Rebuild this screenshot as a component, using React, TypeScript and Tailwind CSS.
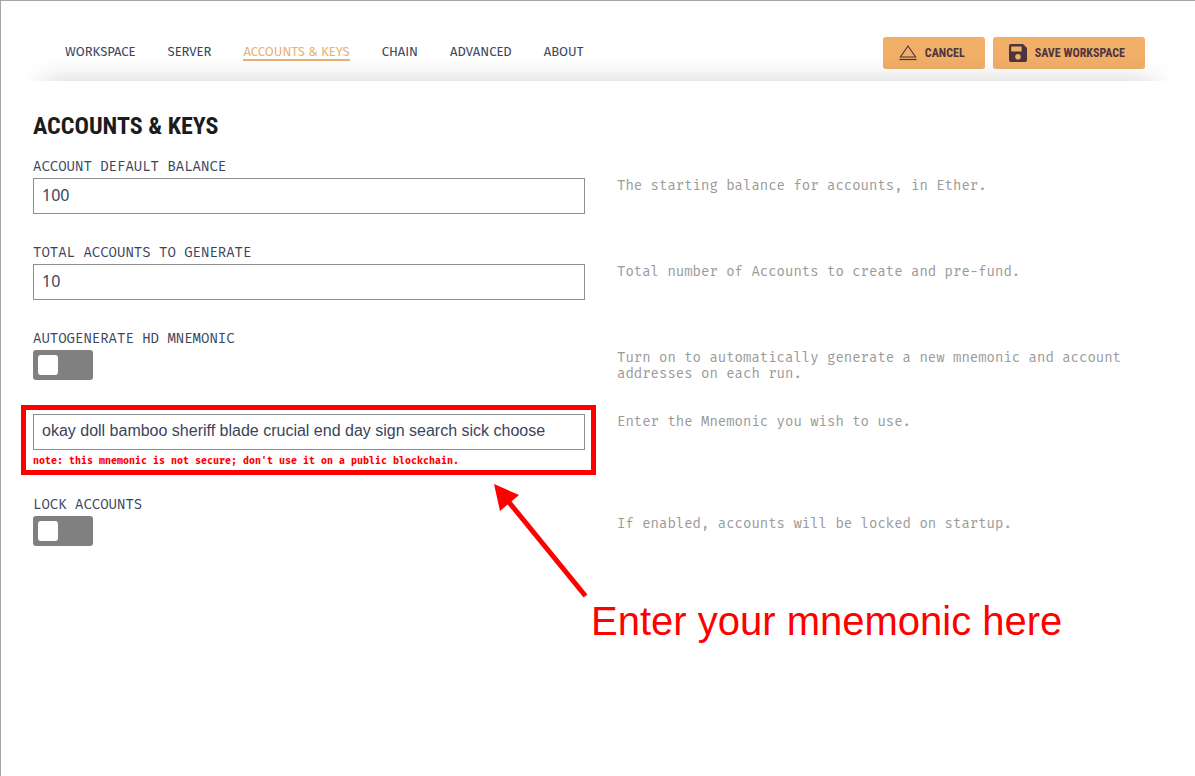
import type { ReactNode } from "react";

const navItems = ["Workspace", "Server", "Accounts & Keys", "Chain", "Advanced", "About"];

const cond = "font-['Roboto_Condensed','Liberation_Sans_Narrow',Roboto,sans-serif]";
const mono = "font-['Fira_Mono','Liberation_Mono',monospace]";
const inputBox = "block h-9 w-full border border-[#8f8f8f] bg-white px-2 pb-0.5 text-base text-[#3a455c] outline-none";

function EjectIcon() {
  return (
    <svg width="18" height="18" viewBox="0 0 18 18" fill="none" stroke="#4e3440" aria-hidden="true">
      <path d="M9 2 L16.6 13 H1.4 Z" strokeWidth="1.1" />
      <path d="M0.5 15.5 H17.5" strokeWidth="1.2" />
    </svg>
  );
}

function SaveIcon() {
  return (
    <svg width="18" height="18" viewBox="0 0 18 18" fill="#4e3440" aria-hidden="true">
      <path
        fillRule="evenodd"
        d="M2 0 H14 L18 4 V16 A2 2 0 0 1 16 18 H2 A2 2 0 0 1 0 16 V2 A2 2 0 0 1 2 0 Z M2.2 2.4 V7.4 H12.6 V2.4 Z M9 10 A2.8 2.8 0 1 0 9 15.6 A2.8 2.8 0 1 0 9 10 Z"
      />
    </svg>
  );
}

function ActionButton({ icon, children }: { icon: ReactNode; children: ReactNode }) {
  return (
    <button
      type="button"
      className={`flex h-8 items-center gap-2 rounded-[3px] bg-[#f1af68] pr-5 pl-4 text-xs font-bold text-[#4e3440] uppercase ${cond}`}
    >
      {icon}
      {children}
    </button>
  );
}

function Row({ help, children }: { help: string; children: ReactNode }) {
  return (
    <div className="grid grid-cols-2 gap-8 pb-8">
      <div>{children}</div>
      <p className={`pt-[18px] text-sm leading-4 text-[#9a9a9a] ${mono}`}>{help}</p>
    </div>
  );
}

function FieldLabel({ htmlFor, children }: { htmlFor: string; children: string }) {
  return (
    <label htmlFor={htmlFor} className={`block h-[18px] text-sm leading-[14px] text-[#3a455c] uppercase ${mono}`}>
      {children}
    </label>
  );
}

function Toggle({ id }: { id: string }) {
  return (
    <input
      id={id}
      type="checkbox"
      className="flex h-[30px] w-[60px] appearance-none items-center rounded-[3px] bg-[#808080] px-[5px] before:size-5 before:rounded-[3px] before:bg-white checked:justify-end checked:bg-[#f1af68]"
    />
  );
}

export default function App() {
  return (
    <div className="flex min-h-screen flex-col border-t border-l border-[#a6a6a6] bg-white font-['Fira_Sans','Open_Sans',sans-serif]">
      <header className="flex h-20 items-center justify-between pt-6 pr-[50px] pb-0 pl-16">
        <nav className="flex gap-8">
          {navItems.map((item, i) => (
            <a
              key={item}
              href="#"
              className={`border-b-2 text-[13px] leading-[14px] uppercase ${
                i === 2 ? "border-[#e9b177] text-[#e9b177]" : "border-transparent text-[#3a455c]"
              }`}
            >
              {item}
            </a>
          ))}
        </nav>
        <div className="flex gap-2">
          <ActionButton icon={<EjectIcon />}>Cancel</ActionButton>
          <ActionButton icon={<SaveIcon />}>Save Workspace</ActionButton>
        </div>
      </header>

      <main className="flex-1 bg-white pt-[31px] pr-[26px] pl-8 shadow-[0_-42px_25px_-42px_rgba(0,0,0,0.18)]">
        <h1 className={`mb-5 text-2xl leading-7 font-bold text-[#1c1c1c] uppercase ${cond}`}>Accounts &amp; Keys</h1>

        <Row help="The starting balance for accounts, in Ether.">
          <FieldLabel htmlFor="balance">Account default balance</FieldLabel>
          <input
            id="balance"
            type="text"
            defaultValue="100"
            className={`${inputBox} font-['Noto_Sans',sans-serif]`}
          />
        </Row>

        <Row help="Total number of Accounts to create and pre-fund.">
          <FieldLabel htmlFor="total">Total accounts to generate</FieldLabel>
          <input
            id="total"
            type="text"
            defaultValue="10"
            className={`${inputBox} font-['Noto_Sans',sans-serif]`}
          />
        </Row>

        <Row help="Turn on to automatically generate a new mnemonic and account addresses on each run.">
          <FieldLabel htmlFor="autogenerate">Autogenerate HD Mnemonic</FieldLabel>
          <Toggle id="autogenerate" />
        </Row>

        <div className="grid grid-cols-2 gap-8 pt-0.5 pb-[30px] -mt-0.5">
          <div className="relative">
            <input
              type="text"
              aria-label="Mnemonic"
              defaultValue="okay doll bamboo sheriff blade crucial end day sign search sick choose"
              className={`${inputBox} font-['Liberation_Sans',sans-serif]`}
            />
            <p className={`pt-1 text-[10px] leading-[14px] font-bold text-[#ff0000] ${mono}`}>
              note: this mnemonic is not secure; don't use it on a public blockchain.
            </p>
            <div className="pointer-events-none absolute -top-[9px] -right-[11px] -bottom-[7px] -left-3 border-[5px] border-[#ff0000]" />
            <svg
              className="pointer-events-none absolute top-[70px] right-0 overflow-visible"
              width="92"
              height="114"
              viewBox="0 0 92 114"
              aria-hidden="true"
            >
              <path d="M1 0 L26 11 L7 27 Z" fill="#ff0000" />
              <path d="M15 17 L92.5 112" stroke="#ff0000" strokeWidth="5" />
            </svg>
            <p className="pointer-events-none absolute top-[183px] left-full ml-1.5 font-['Liberation_Sans',sans-serif] text-[40px] leading-[48px] whitespace-nowrap text-[#ff0000]">
              Enter your mnemonic here
            </p>
          </div>
          <p className={`text-sm leading-4 text-[#9a9a9a] ${mono}`}>Enter the Mnemonic you wish to use.</p>
        </div>

        <Row help="If enabled, accounts will be locked on startup.">
          <FieldLabel htmlFor="lock">Lock accounts</FieldLabel>
          <Toggle id="lock" />
        </Row>
      </main>
    </div>
  );
}
